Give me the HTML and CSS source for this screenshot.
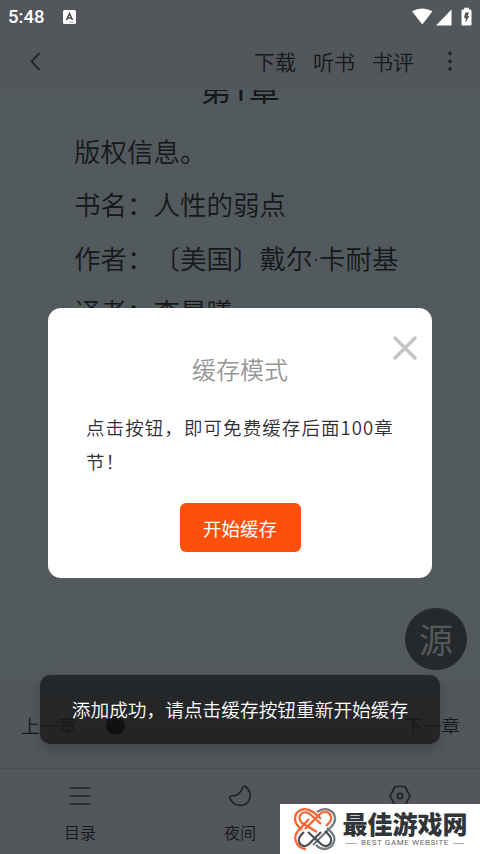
FILE: index.html
```html
<!DOCTYPE html>
<html lang="zh-CN">
<head>
<meta charset="utf-8">
<title>阅读器</title>
<link rel="stylesheet" href="styles.css">
</head>
<body>
<div class="screen">
  <header class="top">
    <div class="status">
      <span class="time">5:48</span>
      <svg class="input-icon" viewBox="0 0 13 14"><rect width="13" height="14" rx="1.5" fill="#fff"/><path d="M3.5 10 6.5 3.5 9.5 10M4.7 8H8.3" fill="none" stroke="#414448" stroke-width="1.5"/><path d="M6.5 12.3h4.5" stroke="#888" stroke-width=".7"/></svg>
      <svg class="signals" viewBox="0 0 60 20"><path d="M0 4.3Q10.3-1.5 20.5 4.3L10.3 17.5Z" fill="#fff"/><path d="M39.5 2.5V18.5H24Z" fill="#fff"/><path d="M49.5 17.5V4Q49.5 2.5 51 2.5H52.2V.7H56.8V2.5H58Q59.5 2.5 59.5 4V17.5Q59.5 18.5 58.5 18.5H50.5Q49.5 18.5 49.5 17.5Z" fill="#fff"/><path d="M53.2 5.5H57L55.8 9H57.3L53.6 15.5V11H52Z" fill="#53565b"/></svg>
    </div>
    <nav class="tools">
      <svg class="back" viewBox="0 0 12 20"><path d="M10.500 2 2.500 10.500 10.500 19" fill="none" stroke="#24272a" stroke-width="1.9"/></svg>
      <span class="tool">下载</span><span class="tool">听书</span><span class="tool">书评</span>
      <svg class="more" viewBox="0 0 6 20"><g fill="#25282b"><circle cx="3" cy="2.500" r="1.9"/><circle cx="3" cy="10.300" r="1.9"/><circle cx="3" cy="18" r="1.9"/></g></svg>
    </nav>
  </header>
  <main class="page">
    <h1>第1章</h1>
    <p>版权信息。</p>
    <p>书名：人性的弱点</p>
    <p>作者：〔美国〕戴尔<span class="dot">·</span>卡耐基</p>
    <p>译者：李晨曦</p>
  </main>
  <footer class="bottom">
    <div class="chapters"><span>上一章</span><i class="thumb"></i><span class="next">下一章</span></div>
    <div class="tabs">
      <div class="tab"><svg viewBox="0 0 24 24"><path d="M1.5 4H22.5M1.5 12H22.5M1.5 20H22.5"/></svg><span>目录</span></div>
      <div class="tab"><svg viewBox="0 0 24 24"><path d="M17.500 2.500C23 7 23.500 13 20 18C15 23.500 5 22.500 1.800 14Q1.300 12 3.500 12C9 12.200 12.500 9 14.300 4.500Q15.500 1.200 17.500 2.500Z"/></svg><span>夜间</span></div>
      <div class="tab"><svg viewBox="0 0 24 24"><path d="M7 2.500H17L22 12 17 21.500H7L2 12Z"/><circle cx="12" cy="12" r="2.700"/></svg></div>
    </div>
  </footer>
  <div class="source">源</div>
  <section class="dialog">
    <svg class="close" viewBox="0 0 24 24"><path d="M2 2 22 22M22 2 2 22"/></svg>
    <h2>缓存模式</h2>
    <p>点击按钮，即可免费缓存后面100章节！</p>
    <button>开始缓存</button>
  </section>
  <div class="toast">添加成功，请点击缓存按钮重新开始缓存</div>
  <div class="brand">
    <svg class="knot" viewBox="0 0 44 44" fill="none" stroke-width="2.300"><g stroke="#777b80"><path d="M24 5C32-1 42 3 42 12Q42 16 38 20L20 38"/><path d="M34 21 38 25C45 32 40 42 31 42Q27 42 23 38"/></g><g stroke="#4b5055"><path d="M11 25 8 28C2 35 10 43 16 37L28 25"/><path d="M15 25 28 37C34 43 42 35 36 28L32 24"/></g><g stroke="#f96332"><path d="M28 12 24 8 20 5C12-1 2 3 2 12Q2 16 6 20L9 23"/><path d="M24 25 9 16C2 9 11 1 18 8L28 17"/><path d="M12 22 27 7C34 1 42 9 36 16L33 19"/><path d="M16 12 5 24C-1 31 4 42 13 42"/></g></svg>
    <div class="brand-copy"><b>最佳游戏网</b><small>BEST GAME WEBSITE</small></div>
  </div>
</div>
</body>
</html>
```
FILE: styles.css
```css
* { box-sizing: border-box; }
body { margin: 0; font-family: "Noto Sans CJK SC", sans-serif; color: #15181a; text-spacing-trim: space-all; }
.screen { position: relative; width: 480px; height: 854px; overflow: hidden; display: flex; flex-direction: column; background: #535a5d; }
.top { height: 90px; background: #53565b; flex: none; }
.status { display: flex; height: 32px; align-items: center; padding: 1px 9px 0 8px; }
.time { color: #fff; font-family: Roboto, sans-serif; font-size: 18.5px; font-weight: 500; width: 55px; }
.input-icon { width: 13px; height: 14px; }
.signals { width: 60px; height: 20px; margin-left: auto; margin-right: -1px; }
.tools { display: flex; align-items: center; height: 58px; padding: 0 27px 0 29px; font-size: 21px; font-weight: 350; line-height: 30px; }
.back { width: 12px; height: 20px; margin-right: auto; }
.tool { width: 42px; margin-right: 17px; white-space: nowrap; }
.more { width: 6px; height: 20px; margin-left: 16px; }
.page { flex: 1; overflow: hidden; padding: 0 74px; }
.page h1 { margin: -22px 0 11px; height: 45px; line-height: 45px; text-align: center; font-family: Roboto, "Noto Sans CJK SC", sans-serif; font-size: 31px; font-weight: 400; }
.page p { margin: 0; height: 53.3px; line-height: 53.3px; font-size: 26.5px; font-weight: 350; white-space: nowrap; }
.dot { font-family: Roboto, sans-serif; }
.bottom { height: 172px; flex: none; background: #53565b; }
.chapters { height: 87px; border-bottom: 1px solid #4b4e53; display: flex; align-items: center; padding: 0 20px 0 21px; font-size: 18.5px; font-weight: 350; }
.thumb { width: 19px; height: 19px; background: #000; border-radius: 50%; margin-left: 29px; }
.next { margin-left: auto; }
.tabs { display: grid; grid-template-columns: repeat(3, 160px); height: 85px; }
.tab { display: flex; flex-direction: column; align-items: center; padding-top: 15px; font-size: 16px; font-weight: 350; }
.tab svg { width: 24px; height: 24px; margin-bottom: 12px; fill: none; stroke: #202326; stroke-width: 1.7; }
.tab span { line-height: 24px; }
.source { position: absolute; left: 405px; top: 608px; width: 62px; height: 62px; border-radius: 50%; background: #26292b; color: #55595c; font-size: 34px; line-height: 61px; text-align: center; }
.dialog { position: absolute; left: 48px; top: 308px; width: 384px; height: 270px; border-radius: 13px; background: #fff; padding: 43px 37px 0 37px; display: flex; flex-direction: column; align-items: center; }
.close { position: absolute; top: 28px; right: 15px; width: 24px; height: 24px; stroke: #c4c4c4; stroke-width: 3.5; stroke-linecap: round; }
.dialog h2 { margin: 0; font-size: 24px; font-weight: 350; color: #969696; line-height: 36px; }
.dialog p { margin: 23px 0 25px; padding-left: 1px; width: 310px; font-size: 18.5px; line-height: 34px; letter-spacing: 1.08px; color: #303034; font-weight: 350; }
.dialog button { border: 0; padding: 0; width: 121px; height: 49px; border-radius: 6px; background: #ff500b; color: #fff; font: 400 18.5px "Noto Sans CJK SC", sans-serif; }
.toast { position: absolute; left: 40px; top: 675px; width: 400px; height: 69px; border-radius: 10px; background: linear-gradient(rgba(23,26,27,.77), rgba(21,21,22,.77)); color: #fff; font-size: 18.7px; font-weight: 350; line-height: 68px; text-align: center; white-space: nowrap; box-shadow: 0 5px 12px #0003; }
.brand { position: absolute; left: 280px; top: 804px; width: 200px; height: 50px; background: #fff; display: flex; padding: 3px 0 0 13px; }
.knot { width: 44px; height: 44px; }
.brand-copy { width: 130px; margin-left: 3px; display: flex; flex-direction: column; align-items: center; color: #303539; }
.brand-copy b { font: 900 25px/32px "Noto Sans CJK SC", sans-serif; }
.brand-copy small { display: flex; align-items: center; gap: 4px; white-space: nowrap; font-family: Roboto, sans-serif; font-size: 8px; line-height: 8px; letter-spacing: .6px; color: #666; }
.brand-copy small::before, .brand-copy small::after { content: ""; width: 11px; height: 1px; background: #aaa; }
```
